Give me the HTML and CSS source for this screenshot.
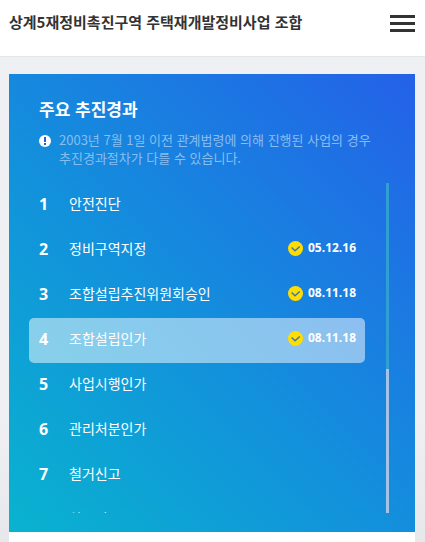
FILE: index.html
```html
<!DOCTYPE html>
<html lang="ko">
<head>
<meta charset="utf-8">
<meta name="viewport" content="width=device-width, initial-scale=1">
<title>상계5재정비촉진구역 주택재개발정비사업 조합</title>
<link rel="stylesheet" href="styles.css">
</head>
<body>
<svg class="defs" aria-hidden="true">
  <symbol id="check" viewBox="0 0 15 15">
    <circle cx="7.5" cy="7.5" r="7.5" fill="#ffdd00"/>
    <path d="M3.6 6.6 L7 9.8 L11.8 5.4" fill="none" stroke="#3976b8" stroke-width="1.4"/>
  </symbol>
</svg>
<header class="header">
  <h1 class="site-name">상계5재정비촉진구역 주택재개발정비사업 조합</h1>
  <button class="menu" type="button" aria-label="메뉴"><span></span><span></span><span></span></button>
</header>
<main class="main">
  <section class="progress">
    <h2 class="heading">주요 추진경과</h2>
    <div class="note">
      <svg class="note-icon" viewBox="0 0 12 12" aria-hidden="true">
        <circle cx="6" cy="6" r="6" fill="#fff"/>
        <path d="M5 2h2v5H5zM5 8h2v2H5z" fill="#1e63d8"/>
      </svg>
      <p>2003년 7월 1일 이전 관계법령에 의해 진행된 사업의 경우 추진경과절차가 다를 수 있습니다.</p>
    </div>
    <div class="scroll-area">
      <ol class="steps">
        <li class="step"><b class="num">1</b><span>안전진단</span></li>
        <li class="step"><b class="num">2</b><span>정비구역지정</span><span class="done"><svg class="check"><use href="#check"/></svg><time>05.12.16</time></span></li>
        <li class="step"><b class="num">3</b><span>조합설립추진위원회승인</span><span class="done"><svg class="check"><use href="#check"/></svg><time>08.11.18</time></span></li>
        <li class="step current"><b class="num">4</b><span>조합설립인가</span><span class="done"><svg class="check"><use href="#check"/></svg><time>08.11.18</time></span></li>
        <li class="step"><b class="num">5</b><span>사업시행인가</span></li>
        <li class="step"><b class="num">6</b><span>관리처분인가</span></li>
        <li class="step"><b class="num">7</b><span>철거신고</span></li>
        <li class="step"><b class="num">8</b><span>착공신고</span></li>
      </ol>
      <div class="track"><div class="thumb"></div></div>
    </div>
  </section>
  <section class="next"></section>
</main>
</body>
</html>
```
FILE: styles.css
```css
* {
  box-sizing: border-box;
  margin: 0;
  padding: 0;
}

body {
  font-family: "Noto Sans CJK KR", sans-serif;
  background: #eff0f4;
}

.defs {
  display: none;
}

.header {
  display: flex;
  justify-content: space-between;
  align-items: flex-start;
  height: 57px;
  padding: 10px 10px 0 9px;
  background: #fff;
  border-bottom: 1px solid #e6e6e6;
}

.site-name {
  font-size: 15px;
  line-height: 24px;
  font-weight: 700;
  color: #333;
  white-space: nowrap;
}

.menu {
  display: flex;
  flex-direction: column;
  gap: 4px;
  width: 25px;
  margin-top: 5px;
  background: none;
  border: 0;
}

.menu span {
  width: 100%;
  height: 3px;
  background: #333;
}

.main {
  padding: 17px 10px 0 9px;
  background: linear-gradient(#eff0f4 75%, #e7e8ec);
}

.progress {
  padding: 22px 26px 19px 20px;
  color: #fff;
  background: linear-gradient(45deg, #09b3cf, #1390dc 45%, #2461e8);
}

.heading {
  padding-left: 10px;
  font-size: 17px;
  line-height: 26px;
  font-weight: 700;
}

.note {
  display: flex;
  gap: 8px;
  margin-top: 9px;
  padding: 0 10px;
  font-size: 13px;
  line-height: 18px;
  color: #88bdf0;
}

.note-icon {
  flex: none;
  width: 12px;
  height: 12px;
  margin-top: 4px;
}

.scroll-area {
  display: flex;
  gap: 21px;
  height: 330px;
  margin-top: 16px;
}

.steps {
  flex: 1;
  overflow: hidden;
  list-style: none;
}

.step {
  display: flex;
  align-items: center;
  height: 45px;
  padding: 0 9px 5px 10px;
  font-size: 14px;
  line-height: 20px;
}

.current {
  background: rgba(255, 255, 255, 0.5);
  border-radius: 5px;
}

.num {
  width: 30px;
  padding-top: 2px;
  font-family: "Noto Sans", sans-serif;
  font-size: 16px;
}

.done {
  display: flex;
  align-items: center;
  gap: 5px;
  margin-left: auto;
  font-family: "Open Sans", sans-serif;
  font-size: 12px;
  font-weight: 700;
}

.check {
  width: 15px;
  height: 15px;
}

.track {
  width: 3px;
  background: #a6c3e5;
}

.thumb {
  height: 186px;
  background: #309fd3;
}

.next {
  height: 10px;
  background: #fff;
}
```
